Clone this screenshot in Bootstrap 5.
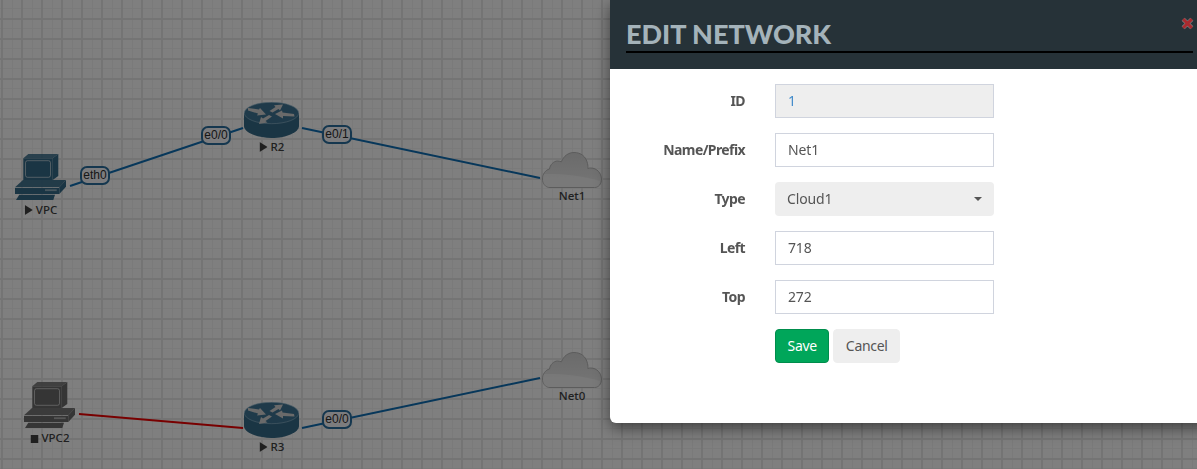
<!DOCTYPE html>
<html lang="en">
<head>
<meta charset="utf-8">
<title>Edit network</title>
<link href="https://cdn.jsdelivr.net/npm/bootstrap@5.3.0/dist/css/bootstrap.min.css" rel="stylesheet">
<style>
html,body{height:100%;overflow:hidden;margin:0;background:#fff}
.topo-canvas{position:relative;width:1197px;height:469px;overflow:hidden;background-color:#fff;
 background-image:
  linear-gradient(90deg,#e9e9e9 2px,transparent 2px),
  linear-gradient(#e9e9e9 2px,transparent 2px),
  linear-gradient(90deg,#f4f4f4 1px,transparent 1px),
  linear-gradient(#f4f4f4 1px,transparent 1px);
 background-size:20px 20px;
 background-position:1px -2px,1px -2px,12px 8px,12px 8px;
 font-family:"Noto Sans",sans-serif}
.wire-layer{position:absolute;left:0;top:0}
.topo-node{position:absolute;line-height:0}
.topo-caption{position:absolute;transform:translateX(-50%);font-size:11.500px;font-weight:500;line-height:14px;color:#404040;white-space:nowrap}
.topo-caption svg{vertical-align:-1px;margin-right:3px}
.port-tag{position:absolute;width:30px;height:19px;border:2.500px solid #2a6f9e;border-radius:7px;background:#f8f8fc;font:12px/14px "Liberation Sans",sans-serif;color:#2e2e2e;text-align:center}
.edit-pane{position:absolute;left:610px;top:0;width:600px;height:423px;z-index:1060;border:0;border-radius:0 0 0 6px;box-shadow:0 5px 15px rgba(0,0,0,.5);overflow:hidden;background:#fff;font-family:"Noto Sans",sans-serif}
.edit-head{display:block;height:69px;padding:16px 4px 0 16px;background:#263238;border:0;border-radius:0;position:relative}
.edit-title{font-family:Lato,sans-serif;font-weight:900;font-size:27px;line-height:36px;height:37px;margin:0;width:567px;color:#a4b3ba;border-bottom:2px solid #000;text-transform:uppercase}
.edit-close{position:absolute;left:571px;top:17px;line-height:0;padding:0;border:0;background:none}
.edit-body{padding:15px 0 0}
.edit-row{display:flex;align-items:center;margin-bottom:15px}
.edit-label{width:135px;margin:0 30px 0 0;padding-bottom:2px;text-align:right;font-size:14px;font-weight:700;color:#555;letter-spacing:-.6px}
.edit-body .form-control,.edit-body .form-select{width:219px;height:34px;padding:0 12px 2px;border:1px solid #d0d4de;border-radius:0;font-size:14px;color:#555;box-shadow:none;letter-spacing:-.15px}
.edit-body .form-control:disabled{background:#eee;color:#428bca}
.edit-body .form-select{border:0;border-radius:4px;background-color:#eee;background-size:8px 4px;background-position:right 12px center;background-image:url("data:image/svg+xml,%3Csvg xmlns='http://www.w3.org/2000/svg' viewBox='0 0 10 5'%3E%3Cpath d='M0 0h10L5 5z' fill='%23555'/%3E%3C/svg%3E")}
.edit-actions{display:flex;gap:4px;padding-left:165px}
.edit-actions .btn{height:34px;font-size:14px;padding:0 11.500px;line-height:30px;letter-spacing:-.3px}
.btn-store{background:#00a65a;border:1px solid #008d4c;color:#fff;border-radius:4px}
.btn-dismiss{background:#eee;border:1px solid #eee;color:#555;border-radius:4px}
</style>
</head>
<body>
<svg width="0" height="0" class="position-absolute">
 <defs>
  <symbol id="pc" viewBox="0 0 52 48">
   <path d="M8.300 5.300l5-4.300h30l-5.600 4.300z" fill="currentColor" opacity=".85"/>
   <path d="M37.700 5.300L43.300 1v22l-5.600 4z" fill="currentColor"/>
   <rect x="8.300" y="5.300" width="29.400" height="21.700" fill="currentColor"/>
   <rect x="10.500" y="7.700" width="25" height="16.600" rx="2" fill="none" stroke="#fff" stroke-opacity=".55" stroke-width="1"/>
   <path d="M0 34.300L8 27h43l-6.700 7.300z" fill="currentColor" opacity=".92"/>
   <path d="M0 35h44.300v6H0z" fill="currentColor"/>
   <path d="M44.300 34.300L51 27v6.700L44.300 41z" fill="currentColor"/>
   <rect x="30" y="36.300" width="11.700" height="1.800" fill="#fff" fill-opacity=".45"/>
   <path d="M4.300 41.700H40l-1.700 5.300H1z" fill="currentColor"/>
  </symbol>
  <symbol id="router" viewBox="0 0 55 36">
   <path d="M0 11v13c0 6 12 12 27.500 12S55 30 55 24V11z" fill="#346a88"/>
   <ellipse cx="27.500" cy="11" rx="27.200" ry="10.700" fill="#3f7594" stroke="#9cc0d3" stroke-width=".6"/>
   <path d="M4 6l11 1.500 1-1.500 6 6.500-9 1 1-2-10-3z" fill="#d4d4d4"/>
   <path d="M39 2.500l-9 .8 1.500 1.700-6 4 3 1.500 6-3.500 1.500 1.500z" fill="#d4d4d4"/>
   <path d="M31 12l7-3.500.5 2L50 12l.5 2.500-11.500-.5v2.500z" fill="#d4d4d4"/>
   <path d="M15 22l2-7 2 1.500 6-3.500 3 1.500-6.500 4.500 2 1.500z" fill="#d4d4d4"/>
  </symbol>
  <symbol id="cloud" viewBox="0 0 60 36">
   <defs><linearGradient id="cg" x1="0" y1="0" x2="0" y2="1"><stop offset="0" stop-color="#d6d6d6"/><stop offset="1" stop-color="#ececec"/></linearGradient></defs>
   <path d="M8 35.500C3 35.500.5 31 .5 27c0-5 3-9 7-10 .5-4 4-8 8-8 1.500 0 3 .5 4 .8C21.500 4 26.500.5 32 .5c7 0 12 4 13.500 11 .5 2 .5 4 .3 5 1-.5 2-.5 3-.5 6 0 10.500 5 10.700 11 .1 5-3 8.500-7 8.500z" fill="url(#cg)" stroke="#b8b8b8"/>
   <path d="M8 35c-4.500 0-7-3.500-7-8 0-2 .5-4 1-5 12-.5 38 1 56 7 0 3-2 6-6 6z" fill="#f6f6f6" opacity=".7"/>
  </symbol>
  <symbol id="go" viewBox="0 0 8 10"><path d="M0 0l8 5-8 5z" fill="currentColor"/></symbol>
 </defs>
</svg>

<main class="topo-canvas">
 <svg class="wire-layer" width="1197" height="469" fill="none" stroke-width="2">
  <path d="M70 186L243 128" stroke="#0f6fb5"/>
  <path d="M302 128L540 178" stroke="#0f6fb5"/>
  <path d="M79 414L243 428" stroke="#f00000"/>
  <path d="M302 428L540 378" stroke="#0f6fb5"/>
 </svg>

 <div class="port-tag" style="left:80px;top:166px">eth0</div>
 <div class="port-tag" style="left:201px;top:126px">e0/0</div>
 <div class="port-tag" style="left:322px;top:125px">e0/1</div>
 <div class="port-tag" style="left:322px;top:410px">e0/0</div>

 <div class="topo-node" style="left:15px;top:153px;color:#346a88"><svg width="52" height="48"><use href="#pc"/></svg></div>
 <div class="topo-caption" style="left:41px;top:203px"><svg width="8" height="10"><use href="#go"/></svg>VPC</div>

 <div class="topo-node" style="left:244px;top:102px"><svg width="55" height="36"><use href="#router"/></svg></div>
 <div class="topo-caption" style="left:272px;top:140px"><svg width="8" height="10"><use href="#go"/></svg>R2</div>

 <div class="topo-node" style="left:542px;top:152px"><svg width="60" height="36"><use href="#cloud"/></svg></div>
 <div class="topo-caption" style="left:572px;top:189px">Net1</div>

 <div class="topo-node" style="left:24px;top:381px;color:#6b6b6b"><svg width="52" height="48"><use href="#pc"/></svg></div>
 <div class="topo-caption" style="left:50px;top:431px"><svg width="8" height="8"><rect width="8" height="8" fill="currentColor"/></svg>VPC2</div>

 <div class="topo-node" style="left:244px;top:402px"><svg width="55" height="36"><use href="#router"/></svg></div>
 <div class="topo-caption" style="left:272px;top:440px"><svg width="8" height="10"><use href="#go"/></svg>R3</div>

 <div class="topo-node" style="left:542px;top:352px"><svg width="60" height="36"><use href="#cloud"/></svg></div>
 <div class="topo-caption" style="left:572px;top:389px">Net0</div>
</main>

<div class="modal-backdrop show"></div>

<section class="modal-content edit-pane">
 <header class="modal-header edit-head">
  <h4 class="modal-title edit-title">Edit Network</h4>
  <button type="button" class="edit-close" aria-label="Close">
   <svg width="13" height="13" viewBox="0 0 12 12"><path d="M2 2l8 8M10 2l-8 8" stroke="#7b8487" stroke-width="4"/><path d="M2 2l8 8M10 2l-8 8" stroke="#a82a2f" stroke-width="2.800"/></svg>
  </button>
 </header>
 <form class="modal-body edit-body">
  <div class="edit-row"><label class="edit-label">ID</label><input class="form-control" value="1" disabled></div>
  <div class="edit-row"><label class="edit-label">Name/Prefix</label><input class="form-control" value="Net1"></div>
  <div class="edit-row"><label class="edit-label">Type</label><select class="form-select"><option>Cloud1</option></select></div>
  <div class="edit-row"><label class="edit-label">Left</label><input class="form-control" value="718"></div>
  <div class="edit-row"><label class="edit-label">Top</label><input class="form-control" value="272"></div>
  <div class="edit-actions"><button type="button" class="btn btn-store">Save</button><button type="button" class="btn btn-dismiss">Cancel</button></div>
 </form>
</section>
<script src="https://cdn.jsdelivr.net/npm/bootstrap@5.3.0/dist/js/bootstrap.bundle.min.js"></script>
</body>
</html>
